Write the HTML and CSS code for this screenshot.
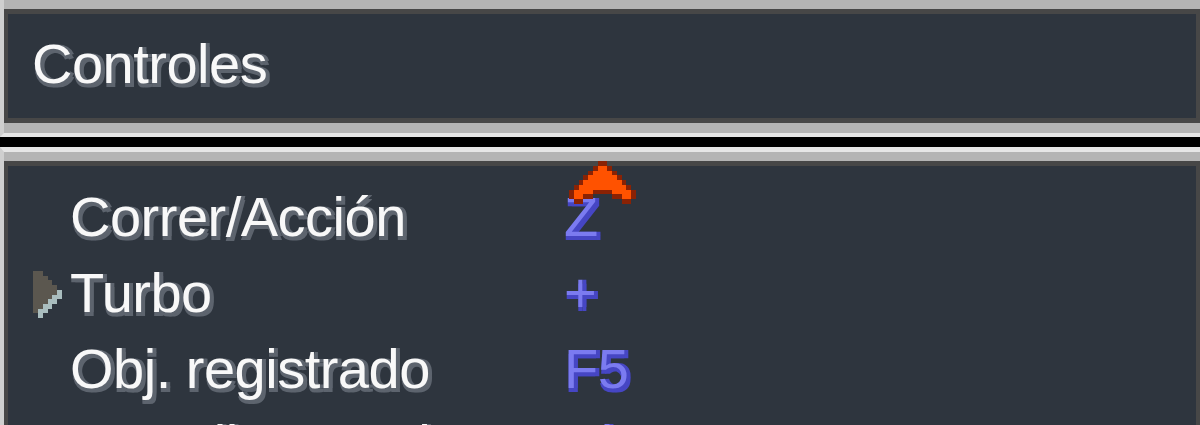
FILE: index.html
```html
<!DOCTYPE html>
<html lang="es">
<head>
<meta charset="utf-8">
<title>Controles</title>
<link rel="stylesheet" href="styles.css">
</head>
<body>
<div class="screen">
  <section class="win win-title">
    <div class="panel panel-title">
      <h1 class="title">Controles</h1>
    </div>
  </section>
  <section class="win win-list">
    <div class="panel panel-list">
      <svg class="scroll-up" viewBox="0 0 14 9" width="67" height="43" shape-rendering="crispEdges" aria-hidden="true">
        <path fill="#8a2204" d="M6 0h2v1h-2z M5 1h1v1h-1z M8 1h1v1h-1z M4 2h1v1h-1z M9 2h1v1h-1z M3 3h1v1h-1z M10 3h1v1h-1z M2 4h1v1h-1z M11 4h1v1h-1z M1 5h1v1h-1z M12 5h1v1h-1z M0 6h1v2h-1z M13 6h1v2h-1z M5 6h4v1h-4z M3 7h2v1h-2z M9 7h2v1h-2z M1 8h2v1h-2z M11 8h2v1h-2z"/>
        <path fill="#ff5200" d="M6 1h2v1h-2z M5 2h4v1h-4z M4 3h6v1h-6z M3 4h8v1h-8z M2 5h10v1h-10z M1 6h4v1h-4z M9 6h4v1h-4z M1 7h2v1h-2z M11 7h2v1h-2z"/>
      </svg>
      <ul class="rows">
        <li class="row">
          <span class="cursor-cell"></span>
          <span class="label">Correr/Acción</span>
          <span class="value">Z</span>
        </li>
        <li class="row is-selected">
          <span class="cursor-cell">
            <svg class="cursor" viewBox="0 0 6 10" width="29" height="47" shape-rendering="crispEdges" aria-hidden="true">
              <path fill="#5b574f" d="M0 0h2v1h-2z M0 1h3v1h-3z M0 2h4v1h-4z M0 3h5v2h-5z M0 5h4v1h-4z M0 6h3v1h-3z M0 7h2v1h-2z M0 8h1v1h-1z"/>
              <path fill="#a9bdbe" d="M5 4h1v1h-1z M4 5h2v1h-2z M3 6h2v1h-2z M2 7h2v1h-2z M1 8h2v1h-2z M1 9h1v1h-1z"/>
            </svg>
          </span>
          <span class="label">Turbo</span>
          <span class="value">+</span>
        </li>
        <li class="row">
          <span class="cursor-cell"></span>
          <span class="label">Obj. registrado</span>
          <span class="value">F5</span>
        </li>
        <li class="row">
          <span class="cursor-cell"></span>
          <span class="label">Pantalla completa</span>
          <span class="value">Alt+Enter</span>
        </li>
      </ul>
    </div>
  </section>
</div>
</body>
</html>
```
FILE: styles.css
```css
html, body {
  margin: 0;
  padding: 0;
  background: #000;
  width: 1200px;
  height: 425px;
  overflow: hidden;
}

.screen {
  width: 1200px;
  font-family: "Liberation Sans", Arial, sans-serif;
  font-size: 56px;
  letter-spacing: -0.5px;
}

.win {
  background: #b4b4b4;
  border-left: 4px solid #cfcfcf;
}

.win-title {
  padding-top: 9px;
  padding-bottom: 10px;
  border-bottom: 4px solid #e6e6e6;
}

.win-list {
  margin-top: 10px;
  border-top: 5px solid #e6e6e6;
  padding-top: 9px;
}

.panel {
  background: #2e353e;
  border: 5px solid #474747;
  border-left-width: 4px;
  border-right-width: 4px;
}

.panel-title {
  height: 104px;
  box-sizing: content-box;
  padding: 0 24px;
}

.title {
  margin: 0;
  padding-top: 22px;
  font-size: 56px;
  font-weight: normal;
  line-height: 56px;
  color: #f8f8f8;
  text-shadow: 4px 0 #5d646e, 0 4px #5d646e, 4px 4px #5d646e;
}

.panel-list {
  position: relative;
  height: 400px;
  border-bottom: none;
}

.scroll-up {
  position: absolute;
  left: 561px;
  top: -5px;
  z-index: 2;
}

.rows {
  list-style: none;
  margin: 0;
  padding: 13px 0 0 0;
}

.row {
  display: grid;
  grid-template-columns: 62px 494px 1fr;
  height: 76px;
  line-height: 76px;
  white-space: nowrap;
}

.cursor-cell {
  display: flex;
  align-items: center;
  padding-left: 25px;
  padding-top: 2px;
}

.cursor {
  display: block;
}

.label {
  color: #f8f8f8;
  text-shadow: 4px 0 #5d646e, 0 4px #5d646e, 4px 4px #5d646e;
}

.value {
  color: #7b7bf0;
  text-shadow: 4px 0 #4646c4, 0 4px #4646c4, 4px 4px #4646c4;
}
```
